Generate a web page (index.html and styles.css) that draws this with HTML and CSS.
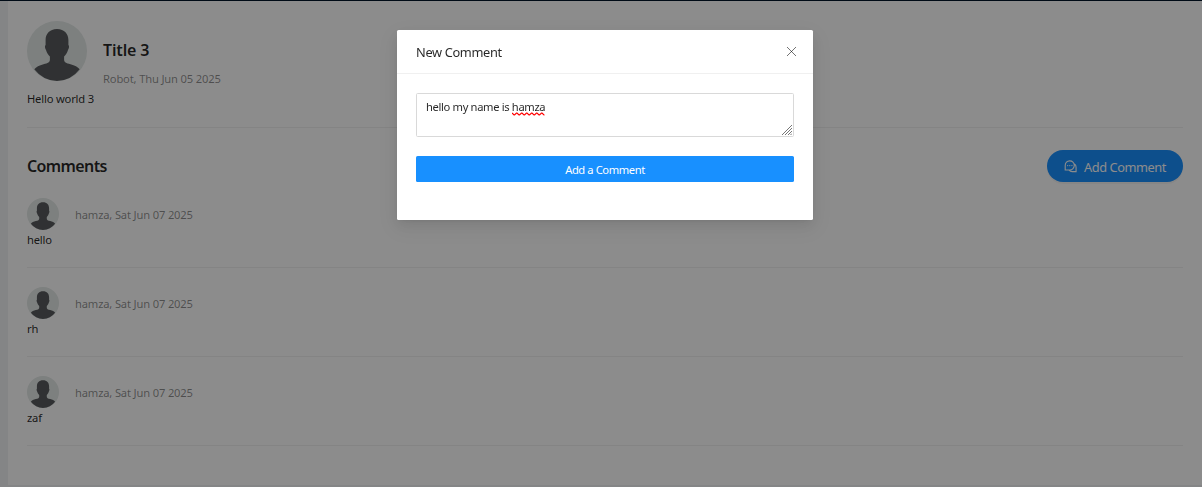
FILE: index.html
```html
<!DOCTYPE html>
<html lang="en">
<head>
<meta charset="utf-8">
<title>Title 3</title>
<link rel="stylesheet" href="styles.css">
</head>
<body>
<svg width="0" height="0" class="defs">
  <symbol id="person" viewBox="0 0 60 60">
    <circle cx="30" cy="30" r="30" fill="#e3e9e7"/>
    <path fill="#585a5d" d="M30 8C22.500 8 18.600 13 18.600 19v5c-1 .5-.8 3 .4 5 .8 3 2.300 5 3.900 6.500v3.200c0 2.400-1.900 3.500-6.400 4.500-4.200 1-7.400 2.700-9.200 5A30 30 0 0 0 30 60a30 30 0 0 0 22.700-11.800c-1.800-2.300-5-4-9.200-5-4.500-1-6.400-2.100-6.400-4.500v-3.200c1.600-1.500 3.100-3.500 3.900-6.500 1.200-2 1.400-4.500.4-5v-5C41.400 13 37.500 8 30 8z"/>
  </symbol>
</svg>
<main class="page">
  <section class="post">
    <header class="post-head">
      <svg class="avatar-lg"><use href="#person"/></svg>
      <div>
        <h1 class="title">Title 3</h1>
        <p class="meta">Robot, Thu Jun 05 2025</p>
      </div>
    </header>
    <p class="text">Hello world 3</p>
  </section>
  <div class="bar">
    <h2 class="heading">Comments</h2>
    <button class="pill">
      <svg class="icon" viewBox="0 0 14 14" fill="none" stroke="currentColor" stroke-width="1.200">
        <path d="M1.300 10.700V5.900a4.900 4.900 0 1 1 4.900 4.800H1.300zM11.200 4.200a4 4 0 0 1 1.800 3.500v4.800H8.700a4.500 4.500 0 0 1-3.200-1.600"/>
        <path stroke-linecap="round" stroke-width="1.300" d="M3.900 6h.1M6.200 6h.1M8.500 6h.1"/>
      </svg>
      <span>Add Comment</span>
    </button>
  </div>
  <article class="comment">
    <div class="comment-head"><svg class="avatar"><use href="#person"/></svg><p class="meta">hamza, Sat Jun 07 2025</p></div>
    <p class="text">hello</p>
  </article>
  <article class="comment">
    <div class="comment-head"><svg class="avatar"><use href="#person"/></svg><p class="meta">hamza, Sat Jun 07 2025</p></div>
    <p class="text">rh</p>
  </article>
  <article class="comment">
    <div class="comment-head"><svg class="avatar"><use href="#person"/></svg><p class="meta">hamza, Sat Jun 07 2025</p></div>
    <p class="text">zaf</p>
  </article>
</main>
<div class="mask">
  <div class="modal">
    <header class="modal-head">
      <span class="modal-title">New Comment</span>
      <svg class="close" viewBox="0 0 11 11"><path d="M1 1l9 9M10 1l-9 9"/></svg>
    </header>
    <div class="modal-body">
      <div class="field">
        <span class="field-text">hello my name is <span class="misspelt">hamza<svg class="squiggle" viewBox="0 0 33 4"><path d="M0 1l2 2h.5l2-2h.5l2 2h.5l2-2h.5l2 2h.5l2-2h.5l2 2h.5l2-2h.5l2 2h.5l2-2h.5l2 2h.5l2-2h.5l2 2h.5"/></svg></span></span>
        <svg class="grip" viewBox="0 0 10 10"><path d="M0 10L10 0M3 10l7-7M6 10l4-4M8.500 10l1.500-1.500"/></svg>
      </div>
      <button class="submit"><span>Add a Comment</span></button>
    </div>
  </div>
</div>
</body>
</html>
```
FILE: styles.css
```css
* { box-sizing: border-box; }
body {
  margin: 0;
  height: 487px;
  overflow: hidden;
  border-top: 1px solid #001529;
  background: #f0f2f5;
  color: rgba(0, 0, 0, .85);
  font-family: "Noto Sans", sans-serif;
  font-size: 11.2px;
  line-height: 18px;
}
h1, h2, p { margin: 0; }
button { border: 0; padding: 0; font-family: inherit; color: #fff; background: #1890ff; }
.defs { position: absolute; }
.page {
  height: 484px;
  margin-left: 8px;
  padding: 20px 19px 0;
  background: #fff;
}
.post { height: 107px; border-bottom: 1px solid #f0f0f0; }
.post-head { display: flex; gap: 16px; height: 69px; }
.avatar-lg { width: 60px; height: 60px; }
.title { padding-top: 17px; font-size: 16px; line-height: 24px; font-weight: 600; letter-spacing: -.15px; }
.meta { color: rgba(0, 0, 0, .45); letter-spacing: -.17px; }
.title + .meta { padding-top: 8px; }
.text { letter-spacing: -.18px; }
.bar { display: flex; justify-content: space-between; padding-top: 22px; height: 70px; }
.heading { padding-top: 4px; font-size: 16px; line-height: 24px; font-weight: 600; letter-spacing: -.62px; }
.pill {
  display: flex; align-items: center; justify-content: center; gap: 7px;
  width: 136px; height: 32px; border-radius: 16px;
  font-size: 12.8px; letter-spacing: -.45px;
  box-shadow: 0 2px 0 rgba(0, 0, 0, .04);
}
.pill span { padding-top: 1px; }
.icon { width: 13px; height: 13px; }
.comment { height: 70px; margin-bottom: 19px; border-bottom: 1px solid #f0f0f0; }
.comment-head { display: flex; gap: 16px; height: 33px; }
.comment-head .meta { padding-top: 8px; }
.avatar { width: 32px; height: 32px; }
.mask { position: fixed; inset: 0; background: rgba(0, 0, 0, .45); }
.modal {
  width: 416px; height: 190px; margin: 30px 0 0 397px;
  border-radius: 1.6px;
  background: #fff;
  box-shadow: 0 2px 5px -3px rgba(0,0,0,.12), 0 5px 13px rgba(0,0,0,.08), 0 7px 22px 6px rgba(0,0,0,.05);
}
.modal-head {
  display: flex; justify-content: space-between; align-items: center;
  height: 44px; padding: 0 16px 0 19px;
  border-bottom: 1px solid #f0f0f0;
  font-size: 12.8px; letter-spacing: -.35px;
}
.close { width: 11px; height: 11px; fill: none; stroke: rgba(0, 0, 0, .55); }
.modal-body { display: grid; gap: 19px; padding: 19px; }
.field {
  display: flex; justify-content: space-between;
  height: 44px; padding: 4px 1px 1px 9px;
  border: 1px solid #d9d9d9; border-radius: 1.6px;
}
.field-text { letter-spacing: -.35px; }
.misspelt { position: relative; }
.squiggle { position: absolute; left: 0; bottom: -2px; width: 33px; height: 4px; fill: none; stroke: #f00; stroke-width: 1.2; }
.grip { align-self: flex-end; width: 10px; height: 10px; fill: none; stroke: #666; stroke-width: .9; }
.submit { height: 26px; border-radius: 1.6px; font-size: 11.2px; letter-spacing: -.41px; }
```
